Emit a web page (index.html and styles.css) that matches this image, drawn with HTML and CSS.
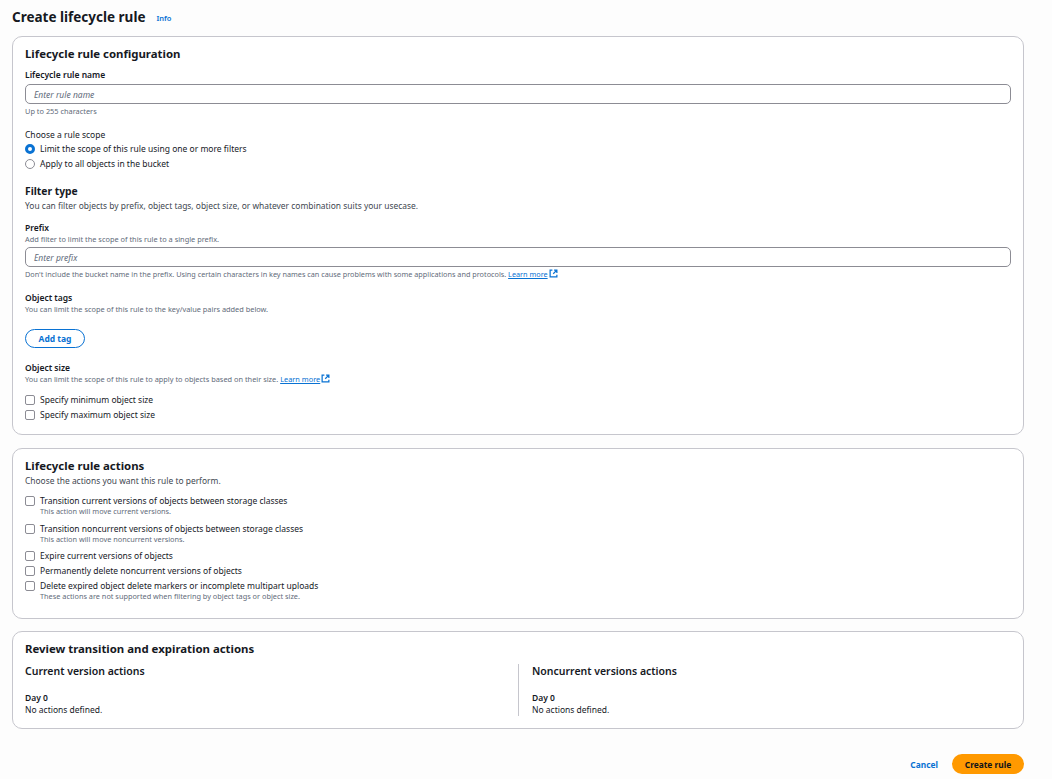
FILE: index.html
```html
<!DOCTYPE html>
<html lang="en">
<head>
    <meta charset="UTF-8">
    <title>Create lifecycle rule</title>
    <link rel="stylesheet" href="styles.css">
</head>
<body>
    <div class="page-header">
        <h1>Create lifecycle rule</h1>
        <a class="info-link">Info</a>
    </div>

    <section class="card card-config">
        <h2>Lifecycle rule configuration</h2>
        <div class="label label-name">Lifecycle rule name</div>
        <div class="text-input">Enter rule name</div>
        <div class="hint hint-name">Up to 255 characters</div>

        <div class="scope-title">Choose a rule scope</div>
        <div class="option"><span class="radio radio-on"></span>Limit the scope of this rule using one or more filters</div>
        <div class="option"><span class="radio"></span>Apply to all objects in the bucket</div>

        <h3>Filter type</h3>
        <div class="desc">You can filter objects by prefix, object tags, object size, or whatever combination suits your usecase.</div>

        <div class="label label-prefix">Prefix</div>
        <div class="hint">Add filter to limit the scope of this rule to a single prefix.</div>
        <div class="text-input input-prefix">Enter prefix</div>
        <div class="hint hint-prefix">Don't include the bucket name in the prefix. Using certain characters in key names can cause problems with some applications and protocols.
            <a class="learn-more">Learn more</a>
            <svg class="ext-icon" viewBox="0 0 16 16"><path d="M6 2H2v12h12v-4M9 2h5v5M14 2L7.500 8.500"/></svg>
        </div>

        <div class="label label-tags">Object tags</div>
        <div class="hint">You can limit the scope of this rule to the key/value pairs added below.</div>
        <button class="btn-outline">Add tag</button>

        <div class="label">Object size</div>
        <div class="hint">You can limit the scope of this rule to apply to objects based on their size.
            <a class="learn-more">Learn more</a>
            <svg class="ext-icon" viewBox="0 0 16 16"><path d="M6 2H2v12h12v-4M9 2h5v5M14 2L7.500 8.500"/></svg>
        </div>
        <div class="option option-first"><span class="checkbox"></span>Specify minimum object size</div>
        <div class="option"><span class="checkbox"></span>Specify maximum object size</div>
    </section>

    <section class="card card-actions">
        <h2>Lifecycle rule actions</h2>
        <div class="desc">Choose the actions you want this rule to perform.</div>
        <div class="option option-action"><span class="checkbox"></span>Transition current versions of objects between storage classes</div>
        <div class="hint hint-option">This action will move current versions.</div>
        <div class="option option-second"><span class="checkbox"></span>Transition noncurrent versions of objects between storage classes</div>
        <div class="hint hint-option">This action will move noncurrent versions.</div>
        <div class="option option-third"><span class="checkbox"></span>Expire current versions of objects</div>
        <div class="option"><span class="checkbox"></span>Permanently delete noncurrent versions of objects</div>
        <div class="option"><span class="checkbox"></span>Delete expired object delete markers or incomplete multipart uploads</div>
        <div class="hint hint-option">These actions are not supported when filtering by object tags or object size.</div>
    </section>

    <section class="card card-review">
        <h2>Review transition and expiration actions</h2>
        <div class="review-cols">
            <div class="review-col">
                <h4>Current version actions</h4>
                <div class="label day">Day 0</div>
                <div class="no-actions">No actions defined.</div>
            </div>
            <div class="review-col review-col-right">
                <h4>Noncurrent versions actions</h4>
                <div class="label day">Day 0</div>
                <div class="no-actions">No actions defined.</div>
            </div>
        </div>
    </section>

    <div class="footer">
        <a class="btn-cancel">Cancel</a>
        <button class="btn-primary">Create rule</button>
    </div>
</body>
</html>
```

FILE: styles.css
```css
* {
    margin: 0;
    padding: 0;
    box-sizing: border-box;
}

body {
    font-family: "Noto Sans", "Open Sans", sans-serif;
    background: #fdfdfd;
    color: #16191f;
    width: 1052px;
    height: 779px;
    overflow: hidden;
    padding: 8px 28px 0 12px;
    font-size: 9px;
}

.page-header {
    display: flex;
    align-items: baseline;
    gap: 11px;
    height: 28px;
}

h1 {
    font-size: 13.500px;
    line-height: 18px;
    font-weight: 700;
}

.info-link {
    color: #0972d3;
    font-size: 7.500px;
    font-weight: 600;
    position: relative;
    top: -1px;
}

.card {
    background: #fff;
    border: 1px solid #c6c6cd;
    border-radius: 10px;
    padding: 9px 12px 0;
}

.card-config {
    height: 399px;
    margin-bottom: 13px;
}

.card-actions {
    height: 171px;
    margin-bottom: 12px;
}

.card-review {
    height: 98px;
}

h2 {
    font-size: 11.400px;
    line-height: 15px;
    font-weight: 700;
}

h3 {
    font-size: 10.300px;
    line-height: 14px;
    font-weight: 700;
    margin-top: 13px;
}

h4 {
    font-size: 10.500px;
    line-height: 14px;
    font-weight: 600;
}

.label {
    font-size: 8.500px;
    line-height: 12px;
    font-weight: 600;
    margin-top: 6px;
}

.label-name {
    margin-top: 8px;
}

.label-prefix {
    margin-top: 10px;
}

.label-tags {
    margin-top: 13px;
}

.text-input {
    height: 20px;
    margin-top: 3px;
    border: 1px solid #8c8c94;
    border-radius: 5px;
    padding: 0 8px;
    font-size: 8.500px;
    line-height: 20px;
    font-style: italic;
    color: #5f6b7a;
}

.input-prefix {
    margin-top: 3px;
}

.hint {
    font-size: 7.390px;
    line-height: 10px;
    color: #5f6b7a;
}

.hint-name {
    margin-top: 2px;
}

.hint-prefix {
    margin-top: 2px;
    font-size: 7.285px;
}

.hint-option {
    padding-left: 15px;
    margin-top: -2px;
    font-size: 7.330px;
}

.scope-title {
    font-size: 8.500px;
    line-height: 12px;
    margin-top: 13px;
}

.desc {
    font-size: 8.440px;
    line-height: 13px;
    color: #414750;
    margin-top: 1px;
}

.option {
    display: flex;
    align-items: center;
    gap: 5px;
    font-size: 8.500px;
    line-height: 15px;
    color: #16191f;
}

.option-first {
    margin-top: 8px;
}

.option-action {
    margin-top: 6px;
}

.option-second {
    margin-top: 5px;
}

.option-third {
    margin-top: 4px;
}

.radio {
    width: 10px;
    height: 10px;
    border: 1px solid #8c8c94;
    border-radius: 50%;
    background: #fff;
    flex-shrink: 0;
}

.radio-on {
    border: 3px solid #0972d3;
}

.checkbox {
    width: 10px;
    height: 10px;
    border: 1px solid #8c8c94;
    border-radius: 2px;
    background: #fff;
    flex-shrink: 0;
}

.learn-more {
    color: #0972d3;
    text-decoration: underline;
}

.ext-icon {
    width: 9px;
    height: 9px;
    margin-left: -1px;
    vertical-align: -1px;
    fill: none;
    stroke: #0972d3;
    stroke-width: 2.200;
}

.btn-outline {
    display: block;
    width: 60px;
    height: 19px;
    margin: 15px 0 14px;
    border: 1px solid #0972d3;
    border-radius: 10px;
    background: #fff;
    color: #0972d3;
    font-family: inherit;
    font-size: 8.500px;
    font-weight: 700;
}

.review-cols {
    display: grid;
    grid-template-columns: 1fr 1fr;
    margin-top: 8px;
}

.review-col-right {
    border-left: 1px solid #c6c6cd;
    padding-left: 13px;
    height: 52px;
}

.day {
    margin-top: 14px;
}

.no-actions {
    font-size: 8.500px;
    line-height: 12px;
}

.footer {
    display: flex;
    justify-content: flex-end;
    align-items: center;
    gap: 14px;
    margin-top: 25px;
}

.btn-cancel {
    color: #0972d3;
    font-size: 8.400px;
    font-weight: 700;
}

.btn-primary {
    width: 72px;
    height: 20px;
    border: none;
    border-radius: 10px;
    background: #ff9900;
    color: #0f141a;
    font-family: inherit;
    font-size: 8.400px;
    font-weight: 700;
}
```
